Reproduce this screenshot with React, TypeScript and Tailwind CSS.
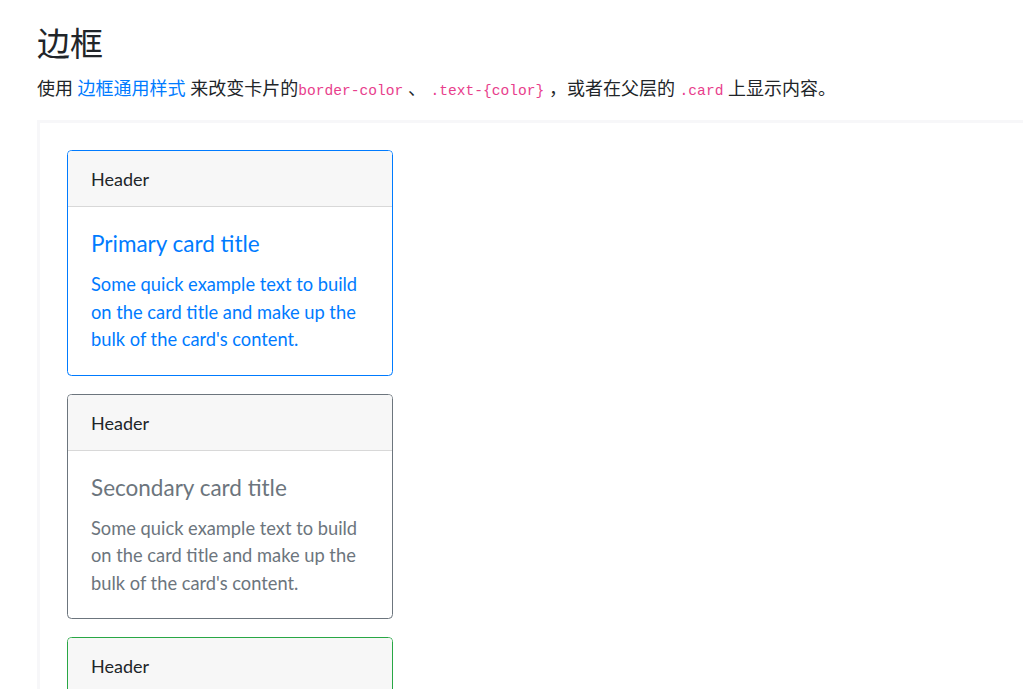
const cards = [
  { title: "Primary card title", border: "border-[#007bff]", text: "text-[#007bff]" },
  { title: "Secondary card title", border: "border-[#6c757d]", text: "text-[#6c757d]" },
  { title: "Success card title", border: "border-[#28a745]", text: "text-[#28a745]" },
];

function Code({ children }: { children: string }) {
  return (
    <code className="font-['Liberation_Mono',monospace] text-[14.6px] text-[#e83e8c]">{children}</code>
  );
}

export default function App() {
  return (
    <div className="min-h-[689px] overflow-hidden bg-white pl-[37px] pt-[21px] font-['Lato','Noto_Sans_CJK_SC',sans-serif] text-[18px] leading-[27px] text-[#212529]">
      <h2 className="mb-[10px] font-['Lato','Noto_Sans_CJK_SC',sans-serif] text-[33px] leading-[44px] font-normal">边框</h2>
      <p className="mb-[15px] whitespace-nowrap">
        使用 <span className="text-[#007bff]">边框通用样式</span> 来改变卡片的<Code>border-color</Code> 、{" "}
        <Code>{".text-{color}"}</Code> ，或者在父层的 <Code>.card</Code> 上显示内容。
      </p>
      <div className="w-[1100px] border-l-[3.5px] border-t-[3.5px] border-[#f7f7f9] p-[27px]">
        <div className="flex flex-col gap-[18px]">
          {cards.map((c) => (
            <div key={c.title} className={`w-[326px] overflow-hidden rounded-[4.5px] border ${c.border}`}>
              <div className="border-b border-black/[0.125] bg-[#f7f7f7] px-[23px] pt-[15px] pb-[13px]">Header</div>
              <div className={`px-[23px] pt-[23px] pb-[21px] ${c.text}`}>
                <h5 className="mb-[14px] text-[22.5px] leading-[27px] font-normal">{c.title}</h5>
                <p className="text-[18.3px] leading-[27.5px]">
                  Some quick example text to build on the card title and make up the bulk of the card's content.
                </p>
              </div>
            </div>
          ))}
        </div>
      </div>
    </div>
  );
}
